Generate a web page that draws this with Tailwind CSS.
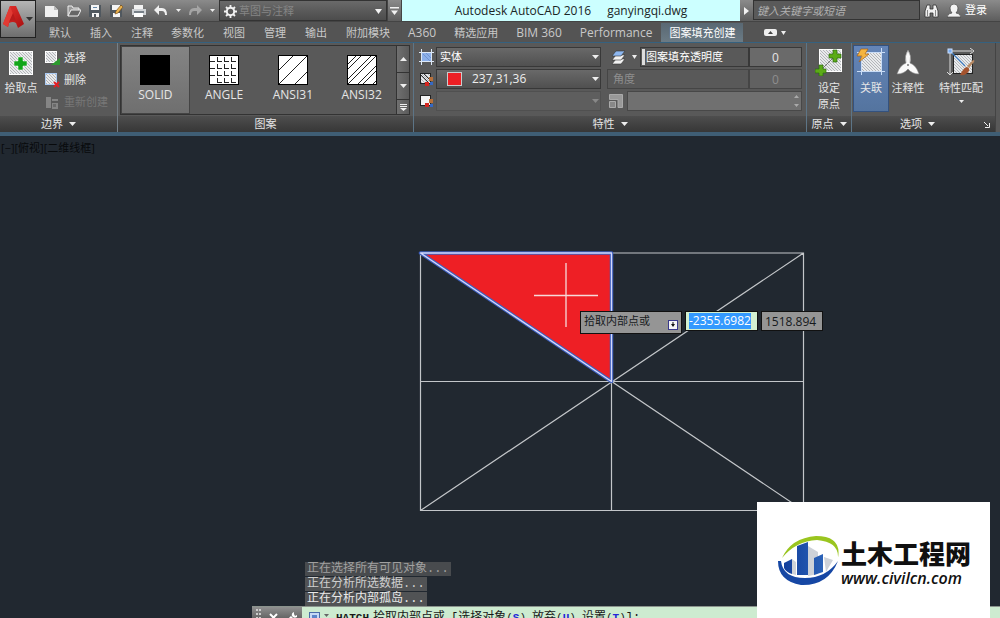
<!DOCTYPE html>
<html lang="zh-CN">
<head>
  <meta charset="UTF-8" />
  <meta name="viewport" content="width=device-width, initial-scale=1" />
  <title>Autodesk AutoCAD 2016 - ganyingqi.dwg</title>
  <script src="https://cdn.jsdelivr.net/npm/@tailwindcss/browser@4"></script>
  <style>
    body { font-family: 'Open Sans', 'Noto Sans CJK SC', sans-serif; }
    .mono { font-family: 'Liberation Mono', 'Noto Sans CJK SC', monospace; }
  </style>
</head>
<body class="h-screen overflow-hidden flex flex-col bg-[#212830] text-xs text-[#e6e6e6]">

  <!-- Shared shapes -->
  <svg width="0" height="0" class="absolute">
    <defs>
      <pattern id="hatch" width="3" height="3" patternUnits="userSpaceOnUse">
        <rect width="3" height="3" fill="#e9eaec" />
        <path d="M0 0L3 3" stroke="#a5a8ac" stroke-width=".8" />
      </pattern>
      <linearGradient id="red" x1="0" y1="0" x2="1" y2="1">
        <stop offset="0" stop-color="#e8332e" />
        <stop offset="1" stop-color="#a90f10" />
      </linearGradient>
      <linearGradient id="blue" x1="0" y1="0" x2="1" y2="0">
        <stop offset="0" stop-color="#123f9c" />
        <stop offset="1" stop-color="#2b62b8" />
      </linearGradient>
    </defs>
  </svg>

  <!-- Title bar and tabs -->
  <header class="flex shrink-0 h-[42px] bg-[#545454]">
    <button aria-label="应用程序菜单" class="w-9 h-[38px] shrink-0 border border-[#222] bg-linear-to-b from-[#b5b5b5] to-[#6e6e6e]">
      <svg width="34" height="36" viewBox="0 0 34 36">
        <path d="M9 5H15L23 23L17 27L15 22Q12 20 8 22L7 26L2 23Z" fill="url(#red)" />
        <path d="M9 5L12 13L8 22L7 26L2 23Z" fill="#e23a33" />
        <path d="M12 12L15 20Q11 18 8 21Z" fill="#b81a1a" />
        <path d="M25 16h7l-3.500 4z" fill="#333" />
      </svg>
    </button>

    <div class="flex-1 min-w-0 flex flex-col">
      <div class="flex h-[22px] bg-linear-to-b from-[#8b8b8b] to-[#5d5d5d] border-b border-[#444]">
        <div class="flex items-center w-[183px] shrink-0 pl-2 gap-[7px]">
          <button aria-label="新建"><svg width="16" height="16" viewBox="0 0 16 16"><path d="M1 3h9l4 4v7H1z" fill="#efefef" /><path d="M10 3v4h4z" fill="#bbb" /></svg></button>
          <button aria-label="打开"><svg width="14" height="16" viewBox="0 0 14 16"><path d="M1 13V3h4l1 2h6v2" fill="#999" stroke="#eee" /><path d="M1 13L4 7h10l-3 6z" fill="#666" stroke="#f2f2f2" /></svg></button>
          <button aria-label="保存"><svg width="14" height="16" viewBox="0 0 14 16"><path d="M1 2h12v12H1z" fill="#50585f" /><path d="M3 2h8v5H3zM4 10h7v4H4z" fill="#f5f5f5" /><path d="M5 4h4v1H5z" fill="#6688a8" /><path d="M6 11h2v3H6z" fill="#50585f" /></svg></button>
          <button aria-label="另存为"><svg width="15" height="16" viewBox="0 0 15 16"><path d="M1 2h12v12H1z" fill="#50585f" /><path d="M3 2h8v5H3zM4 10h7v4H4z" fill="#f5f5f5" /><path d="M6 11l1-3 5-6 2 2-5 6z" fill="#eab24e" stroke="#6d4617" stroke-width=".6" /></svg></button>
          <button aria-label="打印"><svg width="16" height="16" viewBox="0 0 16 16"><path d="M3 2h9v5H3z" fill="#f3f3f3" /><path d="M1 6h14v6H1z" fill="#d0d3d6" /><path d="M3 8h10v2H3z" fill="#778088" /><path d="M3 10h9v4H3z" fill="#fff" /></svg></button>
          <button aria-label="放弃" class="flex items-center gap-2"><svg width="14" height="14" viewBox="0 0 14 14"><path d="M0 6l5-5v3h3q5 0 5 7h-2q0-4-3-4H5v4z" fill="#f0f0f0" /></svg><svg width="5" height="3"><path d="M0 0h5L2.500 3z" fill="#eee" /></svg></button>
          <button aria-label="重做" class="flex items-center gap-2"><svg width="14" height="14" viewBox="0 0 14 14"><path d="M14 6L9 1v3H6Q1 4 1 11h2q0-4 3-4h3v4z" fill="#a5a5a5" /></svg><svg width="5" height="3"><path d="M0 0h5L2.500 3z" fill="#eee" /></svg></button>
        </div>
        <div class="relative w-[168px] shrink-0 border border-[#333] bg-linear-to-b from-[#6a6a6a] to-[#4c4c4c]">
          <svg class="absolute left-1 top-1" width="13" height="13" viewBox="0 0 13 13"><circle cx="6.500" cy="6.500" r="3.700" fill="none" stroke="#f2f2f2" stroke-width="2" /><path d="M6.500 0v3M6.500 10v3M0 6.500h3M10 6.500h3M2 2l2 2M9 9l2 2M11 2L9 4M4 9l-2 2" stroke="#f2f2f2" stroke-width="1.800" /></svg>
          <select aria-label="工作空间" class="appearance-none w-full h-5 pl-[19px] text-[11px] leading-5 text-[#858585] outline-none"><option>草图与注释</option></select>
          <svg class="absolute right-1 top-2" width="7" height="5"><path d="M0 0h7L3.500 5z" fill="#f2f2f2" /></svg>
        </div>
        <button aria-label="自定义快速访问工具栏" class="w-[15px] shrink-0 flex justify-center items-center border-x border-[#444]"><svg width="9" height="8"><path d="M0 0h9v1.500H0zM1 3.500h7L4.500 8z" fill="#f2f2f2" /></svg></button>
        <h1 class="flex-1 min-w-0 flex justify-center gap-4 bg-[#ccffff] text-[#1b2626] leading-[22px] pb-px whitespace-nowrap"><span>Autodesk AutoCAD 2016</span><span>ganyingqi.dwg</span></h1>
        <button aria-label="展开搜索" class="w-[13px] shrink-0 flex justify-center items-center"><svg width="5" height="8"><path d="M0 0v8L5 4z" fill="#f2f2f2" /></svg></button>
        <input type="search" aria-label="搜索" placeholder="键入关键字或短语" class="w-[167px] shrink-0 h-5 px-[3px] text-[11px] italic bg-[#5a5a5a] border border-[#333] placeholder:text-[#b0b0b0] outline-none" />
        <div class="flex items-center gap-2 w-20 shrink-0 pl-1">
          <button aria-label="查找"><svg width="15" height="14" viewBox="0 0 15 14"><path d="M3 1h3v4h3V1h3l2 6v6H9V9H6v4H1V7z" fill="#f0f0f0" stroke="#333" stroke-width=".8" /><path d="M3.500 6v6M11.500 6v6" stroke="#888" /></svg></button>
          <button class="flex items-center gap-1 text-[11px] text-white whitespace-nowrap"><svg width="14" height="14" viewBox="0 0 14 14"><path d="M7 0q4 0 4 4 0 3-2 5 4 0 5 4H0q1-4 5-4-2-2-2-5 0-4 4-4" fill="#f3f3f3" stroke="#444" stroke-width=".7" /></svg>登录</button>
        </div>
      </div>

      <nav class="flex h-5 pt-px pl-1 text-[#c9c9c9] text-[11px] leading-[19px] whitespace-nowrap">
        <button class="px-[9px]">默认</button>
        <button class="px-[10px]">插入</button>
        <button class="px-[9px]">注释</button>
        <button class="px-[9px]">参数化</button>
        <button class="px-[10px]">视图</button>
        <button class="px-[9px]">管理</button>
        <button class="px-[10px]">输出</button>
        <button class="px-[9px]">附加模块</button>
        <button class="px-[9px] text-xs">A360</button>
        <button class="px-[9px]">精选应用</button>
        <button class="px-[9px] text-xs">BIM 360</button>
        <button class="px-[9px] text-xs">Performance</button>
        <button class="px-2 bg-linear-to-b from-[#596873] to-[#6b7b85] text-white">图案填充创建</button>
        <button aria-label="最小化功能区" class="flex items-center gap-1 pl-[21px]"><svg width="13" height="7"><rect width="13" height="7" rx="2" fill="#eee" /><path d="M4 5h5L6.500 2z" fill="#444" /></svg><svg width="5" height="4"><path d="M0 0h5L2.500 4z" fill="#eee" /></svg></button>
      </nav>
    </div>
  </header>

  <!-- Ribbon -->
  <section class="flex shrink-0 h-[94px] pr-1 border-t border-[#35617f] border-b-4 border-b-[#3f5e75] bg-[#595959] text-[11px]">

    <div class="w-[118px] shrink-0 flex flex-col border-r border-[#758088]">
      <div class="flex-1 flex pt-1">
        <button class="w-[42px] flex flex-col items-center pt-1 gap-[5px] whitespace-nowrap">
          <svg width="24" height="24" viewBox="0 0 24 24"><rect x=".5" y=".5" width="23" height="23" fill="url(#hatch)" stroke="#fff" /><path d="M9 6h5v4h4v5h-4v4H9v-4H5v-5h4z" fill="#12a51a" stroke="#fff" stroke-width=".5" /></svg>
          <span class="leading-4">拾取点</span>
        </button>
        <div class="flex flex-col pl-[3px]">
          <button class="flex items-center gap-1 h-[22px]"><svg width="15" height="15" viewBox="0 0 15 15"><rect x=".5" y=".5" width="11" height="11" fill="url(#hatch)" stroke="#fff" /><path d="M15 7v7H6z" fill="#2c9a2e" /></svg>选择</button>
          <button class="flex items-center gap-1 h-[22px]"><svg width="15" height="15" viewBox="0 0 15 15"><rect x=".5" y=".5" width="11" height="11" fill="url(#hatch)" stroke="#a9c9f2" /><path d="M9 9l5 5M14 9l-5 5" stroke="#e22024" stroke-width="2" /></svg>删除</button>
          <button class="flex items-center gap-1 h-[22px] text-[#777]" disabled><svg width="15" height="15" viewBox="0 0 15 15"><path d="M1 2h5v11H1zM7 4h6v2H7zM7 8h6v6H7z" fill="#858585" /><path d="M8 9h3v3H8z" fill="#6a6a6a" /></svg>重新创建</button>
        </div>
      </div>
      <button class="h-4 flex justify-center items-center gap-[6px] bg-linear-to-b from-[#4e4e4e] to-[#373737]">边界<svg width="7" height="4"><path d="M0 0h7L3.500 4z" fill="#eee" /></svg></button>
    </div>

    <div class="w-[296px] shrink-0 flex flex-col border-r border-[#5d7587]">
      <div class="flex-1 flex ml-[2px] mr-[3px] mt-[2px] mb-px border border-[#333] text-xs">
        <div class="flex-1 grid grid-cols-4">
          <button class="flex flex-col items-center pt-2 gap-[2px] border border-[#444] bg-linear-to-b from-[#848484] to-[#6f6f6f]">
            <svg width="30" height="30"><rect width="30" height="30" /></svg>SOLID
          </button>
          <button class="flex flex-col items-center pt-[9px] gap-[2px]">
            <svg width="30" height="30" viewBox="0 0 30 30"><rect x=".5" y=".5" width="29" height="29" fill="#fff" stroke="#000" /><path d="M1 6.500h5M8 6.500h5M15 6.500h5M22 6.500h5M1 13.500h5M8 13.500h5M15 13.500h5M22 13.500h5M1 20.500h5M8 20.500h5M15 20.500h5M22 20.500h5M8 27.500h5M15 27.500h5M22 27.500h5M8.500 2v5M15.500 2v5M22.500 2v5M8.500 9v5M15.500 9v5M22.500 9v5M8.500 16v5M15.500 16v5M22.500 16v5M8.500 23v5M15.500 23v5M22.500 23v5" stroke="#222" /></svg>ANGLE
          </button>
          <button class="flex flex-col items-center pt-[9px] gap-[2px]">
            <svg width="30" height="30" viewBox="0 0 30 30"><rect x=".5" y=".5" width="29" height="29" fill="#fff" stroke="#000" /><path d="M1 15L15 1M1 29L29 1M17 29L29 17" stroke="#222" /></svg>ANSI31
          </button>
          <button class="flex flex-col items-center pt-[9px] gap-[2px]">
            <svg width="30" height="30" viewBox="0 0 30 30"><rect x=".5" y=".5" width="29" height="29" fill="#fff" stroke="#000" /><path d="M1 9L9 1M1 14L14 1M1 24L24 1M1 29L29 1M11 29L29 11M16 29L29 16M26 29L29 26" stroke="#222" /></svg>ANSI32
          </button>
        </div>
        <div class="w-[13px] flex flex-col border-l border-[#333] divide-y divide-[#333] bg-linear-to-r from-[#707070] to-[#5b5b5b]">
          <button aria-label="上一行" class="flex-1 flex justify-center items-center"><svg width="7" height="4"><path d="M0 4h7L3.500 0z" fill="#eee" /></svg></button>
          <button aria-label="下一行" class="flex-1 flex justify-center items-center"><svg width="7" height="4"><path d="M0 0h7L3.500 4z" fill="#eee" /></svg></button>
          <button aria-label="展开图案" class="h-[14px] flex justify-center items-center"><svg width="7" height="7"><path d="M0 0h7v1H0zM0 2h7v1H0zM0 4h7L3.500 7z" fill="#eee" /></svg></button>
        </div>
      </div>
      <div class="h-4 flex justify-center items-center bg-linear-to-b from-[#4e4e4e] to-[#373737]">图案</div>
    </div>

    <div class="flex-1 min-w-0 flex flex-col border-r border-[#5d7587]">
      <div class="flex-1 flex gap-[6px] pl-[5px] pr-1 pt-1">
        <div class="flex-1 min-w-0 flex flex-col gap-[2px]">
          <div class="flex items-center gap-[2px]">
            <svg width="15" height="16" viewBox="0 0 15 16" class="shrink-0"><rect x="3" y="3" width="9" height="10" fill="#8cb0ea" /><path d="M0 3.500h15M0 12.500h15M2.500 0v16M12.500 0v16" stroke="#dde8f6" /><path d="M4 5l7 7M7 4l5 5" stroke="#6f93cf" /></svg>
            <span class="relative flex-1"><select aria-label="图案填充类型" class="appearance-none block w-full h-5 px-[3px] border border-[#383838] bg-linear-to-b from-[#696969] to-[#505050] text-white outline-none"><option>实体</option></select><svg class="absolute right-[2px] top-2" width="7" height="4"><path d="M0 0h7L3.500 4z" fill="#eee" /></svg></span>
          </div>
          <div class="flex items-center gap-[2px]">
            <svg width="15" height="16" viewBox="0 0 15 16" class="shrink-0"><rect x="1.500" y="2.500" width="10" height="10" fill="url(#hatch)" stroke="#222" /><path d="M2 4l8 8M5 3l6 6" stroke="#333" /><path d="M6 11h4v4H6z" fill="#d5261f" /><path d="M10 6h4v4h-4z" fill="#b8703a" /><path d="M11 11h3v3h-3z" fill="#3568c4" /></svg>
            <span class="relative flex-1"><select aria-label="图案填充颜色" class="appearance-none block w-full h-5 pl-[35px] border border-[#383838] bg-linear-to-b from-[#696969] to-[#505050] text-xs leading-4 text-[#eee] outline-none"><option>237,31,36</option></select><i class="absolute left-[11px] top-[3px] w-[15px] h-[14px] border border-[#ccc] bg-[#ed1f24]"></i><svg class="absolute right-[2px] top-2" width="7" height="4"><path d="M0 0h7L3.500 4z" fill="#eee" /></svg></span>
          </div>
          <div class="flex items-center gap-[2px]">
            <svg width="15" height="16" viewBox="0 0 15 16" class="shrink-0"><rect x="1.500" y="2.500" width="10" height="10" fill="#f4f4f4" stroke="#222" /><path d="M6 10h4v4H6z" fill="#d5261f" /><path d="M10 6h4v4h-4z" fill="#b8703a" /><path d="M11 11h3v3h-3z" fill="#3568c4" /></svg>
            <span class="relative flex-1"><select aria-label="背景色" disabled class="appearance-none block w-full h-5 border border-[#505050] bg-[#5e5e5e] outline-none"><option></option></select><svg class="absolute right-[2px] top-2" width="7" height="4"><path d="M0 0h7L3.500 4z" fill="#888" /></svg></span>
          </div>
        </div>
        <div class="w-[195px] shrink-0 flex flex-col gap-[2px]">
          <div class="flex items-center h-5">
            <button aria-label="图层" class="w-[33px] flex items-center gap-[6px] pl-1"><svg width="15" height="15" viewBox="0 0 15 15"><path d="M5 9h9l-4 5H1z" fill="#f2f2f2" stroke="#333" stroke-width=".6" /><path d="M5 5h9l-4 5H1z" fill="#f2f2f2" stroke="#333" stroke-width=".6" /><path d="M5 1h9l-4 5H1z" fill="#8db7f0" stroke="#333" stroke-width=".6" /></svg><svg width="5" height="4"><path d="M0 0h5L2.500 4z" fill="#eee" /></svg></button>
            <label for="opacity" class="flex-1 flex items-center h-5 border border-[#383838] pl-px text-white"><i class="w-[3px] h-4 mr-px bg-[#ddd]"></i>图案填充透明度</label>
            <input id="opacity" value="0" class="w-[53px] h-5 border border-[#383838] bg-[#6a6a6a] text-center text-xs outline-none" />
          </div>
          <div class="flex items-center h-5 text-[#8e8e8e]">
            <label for="angle" class="flex-1 h-5 border border-[#454545] pl-[5px] leading-[18px]">角度</label>
            <input id="angle" value="0" disabled class="w-[53px] h-5 border border-[#454545] bg-[#616161] text-center text-xs" />
          </div>
          <div class="flex items-center gap-1 h-5 pl-[2px]">
            <svg width="14" height="15" viewBox="0 0 14 15"><path d="M.500.500h13v13H9v-8H.500z" fill="#999" stroke="#aaa" /><path d="M.500 7.500h6v6h-6z" fill="#888" stroke="#aaa" /></svg>
            <span class="relative flex-1"><input aria-label="比例" disabled class="block w-full h-5 border border-[#484848] bg-[#707070]" /><svg class="absolute right-[3px] top-1" width="5" height="12"><path d="M0 3h5L2.500 0zM0 9h5l-2.500 3z" fill="#aaa" /></svg></span>
          </div>
        </div>
      </div>
      <button class="h-4 flex justify-center items-center gap-[6px] bg-linear-to-b from-[#4e4e4e] to-[#373737]">特性<svg width="7" height="4"><path d="M0 0h7L3.500 4z" fill="#eee" /></svg></button>
    </div>

    <div class="w-[45px] shrink-0 flex flex-col border-r border-[#5d7587]">
      <button class="flex-1 flex flex-col items-center pt-[5px] gap-1 whitespace-nowrap">
        <svg width="28" height="28" viewBox="0 0 28 28"><rect x="4.500" y="1.500" width="22" height="22" fill="url(#hatch)" stroke="#fff" /><path d="M5 23L20 8" stroke="#777" /><path d="M18 2h4v4h4v4h-4v4h-4v-4h-4V6h4zM4 17h4v4h3v4H8v3H4v-3H0v-4h4z" fill="#5cab17" stroke="#2c6b12" stroke-width=".7" /></svg>
        <span class="leading-4">设定<br />原点</span>
      </button>
      <button class="h-4 flex justify-center items-center gap-[6px] bg-linear-to-b from-[#4e4e4e] to-[#373737]">原点<svg width="7" height="4"><path d="M0 0h7L3.500 4z" fill="#eee" /></svg></button>
    </div>

    <div class="w-[144px] shrink-0 flex flex-col border-r border-[#444]">
      <div class="flex-1 flex items-start pt-[2px] pl-px whitespace-nowrap">
        <button class="w-[36px] h-[67px] flex flex-col items-center pt-[2px] gap-[5px] border border-[#34527f] bg-linear-to-b from-[#6485b8] to-[#54749f]">
          <svg width="30" height="27" viewBox="0 0 30 27"><rect x="6" y="5" width="19" height="18" fill="url(#hatch)" /><path d="M1 4.500h28M1 23.500h28M5.500 1v26M25.500 0v27" stroke="#c9dcf6" /><path d="M5 1h7L9 6h4L3 14l3-6H1z" fill="#f5b43f" stroke="#a55f18" stroke-width=".7" /></svg>
          <span class="leading-4">关联</span>
        </button>
        <button class="w-[38px] flex flex-col items-center pt-[5px] gap-1">
          <svg width="24" height="26" viewBox="0 0 24 26"><path d="M12 0q4 6 2 13 6 2 9 11-7 0-11-5-4 5-11 5 3-9 9-11-2-7 2-13" fill="#fafafa" stroke="#888" stroke-width=".6" /><circle cx="12" cy="15" r="1" fill="#777" /></svg>
          <span class="leading-4">注释性</span>
        </button>
        <button class="flex-1 flex flex-col items-center pt-[3px] gap-1">
          <svg width="28" height="28" viewBox="0 0 28 28"><rect x="6.500" y="6.500" width="19" height="19" fill="url(#hatch)" stroke="#222" /><path d="M3 3h22M3 3v23M23 0l4 3-4 3M0 24l3 3 3-3" fill="none" stroke="#ddd" /><path d="M3 3l15 15" stroke="#3d78bd" stroke-width="1.300" /><rect x="1" y="1" width="4" height="4" fill="#78acf1" stroke="#c9dfff" /><path d="M20 18l6-6q2 0 1 2l-5 6z" fill="#b78963" /><path d="M13 27q4-8 7-8 3 1 2 4-3 5-9 4" fill="#a4532e" /></svg>
          <span class="leading-4">特性匹配</span>
          <svg width="5" height="3"><path d="M0 0h5L2.500 3z" fill="#eee" /></svg>
        </button>
      </div>
      <div class="relative h-4 flex justify-center bg-linear-to-b from-[#4e4e4e] to-[#373737]">
        <button class="flex items-center gap-[6px] pr-3">选项<svg width="7" height="4"><path d="M0 0h7L3.500 4z" fill="#eee" /></svg></button>
        <button aria-label="图案填充设置" class="absolute right-[5px] top-[6px]"><svg width="6" height="6" viewBox="0 0 6 6"><path d="M0 0l4 4M5.500 1v4.500H1" stroke="#eee" fill="none" /></svg></button>
      </div>
    </div>
  </section>

  <!-- Drawing area -->
  <main class="relative flex-1 overflow-hidden">
    <p class="absolute left-px top-1 text-[11px] leading-4 text-[#080a0c]">[−][俯视][二维线框]</p>

    <svg class="absolute left-[415px] top-[111px]" width="394" height="270" viewBox="0 0 394 270">
      <path d="M5.500 6H388.500V263.500H5.500ZM5.500 134.500H388.500M196.500 6V263.500M5.500 6L388.500 263.500M5.500 263.500L388.500 6" fill="none" stroke="#c3c6c9" stroke-width="1.200" />
      <path d="M5.500 6H196.500V134.500Z" fill="#ee1f25" stroke="#3e60bd" stroke-width="3.500" stroke-linejoin="round" />
      <path d="M5.500 6H196.500V134.500Z" fill="none" stroke="#d4d8fb" stroke-width="1.300" stroke-linejoin="round" />
      <path d="M119 48.500H183M151 16V80" stroke="#f6dada" stroke-width="1.300" />
    </svg>

    <!-- Dynamic input -->
    <div class="absolute left-[580px] top-[175px] flex items-start gap-[3px] text-[11px] text-[#16191c] whitespace-nowrap">
      <div class="w-[102px] h-[23px] flex items-center justify-between px-[3px] border border-[#111] bg-[#959595]">
        <span class="leading-4 pb-1">拾取内部点或</span>
        <button aria-label="选项" class="mt-1"><svg width="10" height="10"><rect x=".5" y=".5" width="9" height="9" fill="#f5f5f5" stroke="#39398c" /><path d="M3 4h4L5 7zM4.500 2h1v3h-1z" fill="#111" /></svg></button>
      </div>
      <div class="w-[73px] h-5 flex items-center pl-[3px] border border-[#111] bg-[#d3f0d0]"><span class="bg-[#3399ff] text-white leading-4 text-xs">-2355.6982</span></div>
      <input aria-label="Y 坐标" value="1518.894" class="w-[62px] h-5 px-[3px] border border-[#111] bg-[#959595] text-xs outline-none" />
    </div>

    <!-- Command line -->
    <div class="mono absolute left-[252px] right-0 bottom-0">
      <ul class="flex flex-col items-start pl-[53px] leading-[14px] text-[#e9e9e9]">
        <li class="px-[2px] mb-px bg-[#484b4e] text-[#a0a0a0]">正在选择所有可见对象...</li>
        <li class="px-[2px] mb-px bg-[#515355] text-[#cfcfcf]">正在分析所选数据...</li>
        <li class="px-[2px] bg-[#515355]">正在分析内部孤岛...</li>
      </ul>
      <div class="flex h-3 overflow-hidden border-t border-[#8b938d] bg-[#cdebd0] text-[#181818] whitespace-nowrap">
        <div class="w-[50px] shrink-0 flex items-start gap-2 pl-1 pt-[2px] bg-linear-to-b from-[#909090] to-[#666]">
          <svg width="5" height="12"><path d="M0 0h2v2H0zM3 0h2v2H3zM0 4h2v2H0zM3 4h2v2H3zM0 8h2v2H0zM3 8h2v2H3z" fill="#ccc" /></svg>
          <button aria-label="关闭" class="pt-1"><svg width="9" height="9"><path d="M1 1l7 7M8 1L1 8" stroke="#fff" stroke-width="2" /></svg></button>
          <button aria-label="自定义" class="pt-[2px]"><svg width="12" height="12"><path d="M1 11l5-5" stroke="#fff" stroke-width="3" /><path d="M8 1Q5 2 6 5q2 3 5 1V4L9 5 8 3z" fill="#fff" /></svg></button>
        </div>
        <div class="flex items-start pl-[7px] pt-[3px] leading-4">
          <svg width="11" height="12" class="mt-px"><rect x=".5" y="1.500" width="10" height="10" fill="#c6daf5" stroke="#4a6ca9" /><path d="M3 4h5v5H3z" fill="#5c84c9" /></svg>
          <svg width="5" height="12" class="ml-1"><path d="M0 4h5L2.500 7z" fill="#666" /></svg>
          <b class="ml-[7px] text-[11px] leading-4">HATCH</b>
          <span class="ml-1">拾取内部点或</span>
          <span class="ml-[6px]">[</span>
          <button class="leading-4">选择对象<span class="text-[11px]">(<b class="text-[#2626d8]">S</b>)</span></button>
          <button class="ml-[6px] leading-4">放弃<span class="text-[11px]">(<b class="text-[#2626d8]">U</b>)</span></button>
          <button class="ml-[6px] leading-4">设置<span class="text-[11px]">(<b class="text-[#2626d8]">T</b>)</span></button>
          <span>]:</span>
        </div>
      </div>
    </div>

    <!-- Site badge -->
    <a href="#" class="absolute right-[10px] bottom-0 w-[233px] h-[116px] flex items-start gap-px pl-[21px] pt-[32px] bg-white text-[#101010] whitespace-nowrap">
      <svg width="62" height="52" viewBox="0 0 62 52" class="shrink-0">
        <path d="M4 24Q13 4 38 2q26 0 22 22 1-16-21-18Q18 7 4 24" fill="#9ac51f" />
        <path d="M0 27Q0 47 23 51q27 1 37-24Q48 44 27 44 5 44 3 27z" fill="#1647a4" />
        <path d="M30 12l10 6v22l-10 2zM46 23l9 3-7 12z" fill="#ced2d8" />
        <path d="M19 12l11-4v33H19zM36 24l9-4v18l-9 3zM6 29l8-4v15q-6-2-8-6z" fill="url(#blue)" />
        <path d="M14 25l4 3v13l-4-1z" fill="#ced2d8" />
      </svg>
      <span class="flex flex-col pt-1">
        <strong class="text-[26px] leading-[32px] font-black">土木工程网</strong>
        <em class="text-base leading-4 font-semibold">www.civilcn.com</em>
      </span>
    </a>
  </main>

</body>
</html>
